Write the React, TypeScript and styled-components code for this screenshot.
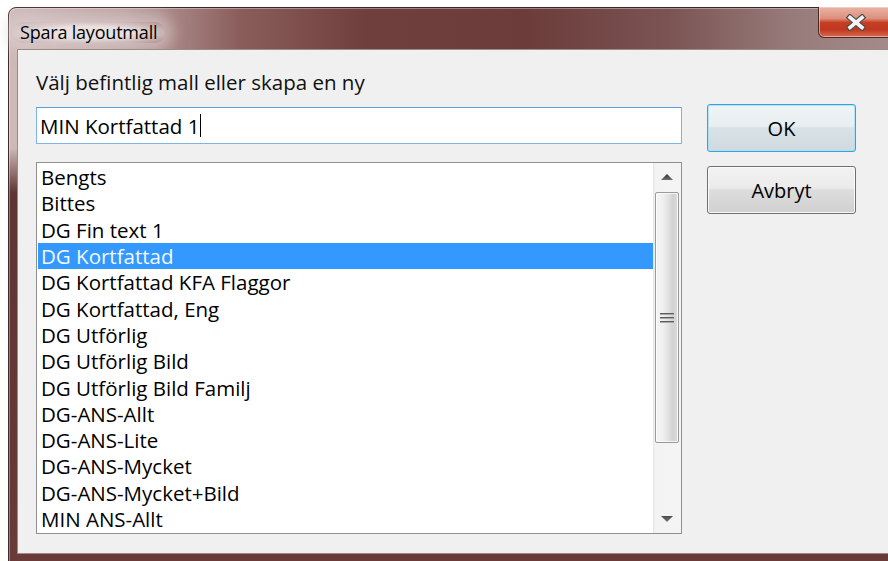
import React from "react";
import styled, { createGlobalStyle } from "styled-components";

const GlobalStyle = createGlobalStyle`
  html, body {
    margin: 0;
    padding: 0;
    background: #ffffff;
    overflow: hidden;
  }
  body {
    font-family: "Open Sans", "Noto Sans", sans-serif;
  }
`;

const FONT = `"Open Sans", "Noto Sans", sans-serif`;

const Desktop = styled.div`
  padding: 7px 0 0 8px;
  width: 888px;
  height: 561px;
  box-sizing: border-box;
`;

const Frame = styled.div`
  width: 892px;
  height: 570px;
  box-sizing: border-box;
  border: 1px solid #3e2a29;
  border-radius: 8px 8px 0 0;
  display: flex;
  flex-direction: column;
  background:
    linear-gradient(180deg, rgba(96, 52, 49, 0) 0px, rgba(96, 52, 49, 0) 140px, #5f3431 185px, #6a3b38 100%),
    linear-gradient(90deg, #cdbab9 0%, #bca3a2 13%, #8a5d5b 26%, #6f3f3d 40%, #6b3c3a 58%, #7a5453 74%, #977b7a 88%, #a58d8c 100%);
  box-shadow: inset 0 0 0 1px rgba(255, 255, 255, 0.35);
`;

const TitleBar = styled.div`
  height: 41px;
  flex: none;
  display: flex;
  align-items: flex-start;
  padding-left: 11px;
`;

const TitleText = styled.div`
  margin-top: 14px;
  font-family: ${FONT};
  font-size: 18px;
  line-height: 21px;
  color: #000;
  letter-spacing: -0.2px;
  padding: 0 8px;
  margin-left: -8px;
  border-radius: 14px;
  background: radial-gradient(ellipse at center, rgba(238, 230, 230, 0.9) 40%, rgba(230, 220, 220, 0.55) 65%, rgba(220, 205, 205, 0) 100%);
  box-shadow: 0 0 14px 8px rgba(228, 216, 216, 0.5);
`;

const CloseButton = styled.div`
  margin-left: auto;
  margin-right: 5px;
  margin-top: -1px;
  width: 76px;
  height: 31px;
  box-sizing: border-box;
  border: 1px solid #4a2a26;
  border-top: none;
  border-radius: 0 0 6px 6px;
  display: flex;
  align-items: center;
  justify-content: center;
  background: linear-gradient(180deg, #e9b3a6 0%, #dd8f7d 38%, #c53e24 52%, #c0381f 75%, #d76b52 100%);
  box-shadow: inset 0 0 0 1px rgba(255, 220, 210, 0.55);
`;

const Client = styled.div`
  margin: 0 8px;
  height: 505px;
  box-sizing: border-box;
  flex: none;
  background: #f0f0f0;
  border: 1px solid #9c8a89;
  padding: 19px 0 0 18px;
  display: flex;
  flex-direction: column;
`;

const Prompt = styled.div`
  font-family: ${FONT};
  font-size: 20.5px;
  line-height: 27px;
  color: #111;
  margin-bottom: 8px;
`;

const Body = styled.div`
  display: flex;
  align-items: flex-start;
  gap: 25px;
`;

const LeftColumn = styled.div`
  width: 646px;
  display: flex;
  flex-direction: column;
  gap: 18px;
  padding-top: 3px;
`;

const TextField = styled.div`
  height: 37px;
  box-sizing: border-box;
  background: #fff;
  border: 1px solid #7eb4ea;
  border-top-color: #5c9fdc;
  display: flex;
  align-items: center;
  padding-left: 3px;
  font-family: ${FONT};
  font-size: 20.5px;
  color: #000;
`;

const Caret = styled.span`
  display: inline-block;
  width: 1px;
  height: 23px;
  background: #000;
  margin-left: 1px;
`;

const ListBox = styled.div`
  height: 372px;
  box-sizing: border-box;
  background: #fff;
  border: 1px solid #8f9091;
  display: flex;
  overflow: hidden;
`;

const Items = styled.div`
  flex: 1;
  padding-top: 1px;
  overflow: hidden;
`;

const Item = styled.div<{ $selected?: boolean }>`
  height: 26.3px;
  margin-left: 1px;
  padding-left: 3px;
  display: flex;
  align-items: center;
  font-family: ${FONT};
  font-size: 20.5px;
  white-space: nowrap;
  color: ${(p) => (p.$selected ? "#f4f8ff" : "#000")};
  background: ${(p) => (p.$selected ? "#3399ff" : "transparent")};
`;

const ScrollBar = styled.div`
  width: 28px;
  flex: none;
  display: flex;
  flex-direction: column;
  align-items: center;
  background: linear-gradient(90deg, #e3e3e3 0px, #f3f3f3 2px, #f4f4f4 100%);
`;

const ArrowCell = styled.div`
  height: 28px;
  width: 100%;
  flex: none;
  display: flex;
  align-items: center;
  justify-content: center;
`;

const Thumb = styled.div`
  width: 24px;
  height: 251px;
  box-sizing: border-box;
  margin-top: 1px;
  border: 1px solid #9a9a9a;
  border-radius: 2px;
  background: linear-gradient(90deg, #f5f5f5 0%, #eeeeee 35%, #e2e2e2 55%, #d3d3d3 75%, #d6d6d6 92%, #ececec 100%);
  box-shadow: inset 0 0 0 1px rgba(255, 255, 255, 0.7);
  display: flex;
  align-items: center;
  justify-content: center;
`;

const Gripper = styled.div`
  width: 14px;
  display: flex;
  flex-direction: column;
  gap: 2px;
  margin-left: -1px;
`;

const GripLine = styled.div`
  height: 2px;
  background: linear-gradient(180deg, #5e5e5e 0 1px, #a9a9a9 1px 2px);
`;

const Spacer = styled.div`
  flex: 1;
`;

const Buttons = styled.div`
  display: flex;
  flex-direction: column;
  gap: 14px;
`;

const PushButton = styled.div<{ $default?: boolean }>`
  width: 149px;
  height: 48px;
  box-sizing: border-box;
  border-radius: 3px;
  border: 1px solid ${(p) => (p.$default ? "#3aa0dc" : "#707070")};
  background: ${(p) =>
    p.$default
      ? "linear-gradient(180deg, #eff4f6 0%, #e8eef1 46%, #d9e2e6 50%, #d0dade 100%)"
      : "linear-gradient(180deg, #f2f2f2 0%, #ebebeb 46%, #dddddd 50%, #d0d0d0 100%)"};
  box-shadow: inset 0 0 0 1px
    ${(p) => (p.$default ? "rgba(160, 225, 250, 0.8)" : "rgba(252, 252, 252, 0.9)")};
  display: flex;
  align-items: center;
  justify-content: center;
  font-family: ${FONT};
  font-size: 20px;
  color: #000;
`;

const templates = [
  "Bengts",
  "Bittes",
  "DG Fin text 1",
  "DG Kortfattad",
  "DG Kortfattad KFA Flaggor",
  "DG Kortfattad, Eng",
  "DG Utförlig",
  "DG Utförlig Bild",
  "DG Utförlig Bild Familj",
  "DG-ANS-Allt",
  "DG-ANS-Lite",
  "DG-ANS-Mycket",
  "DG-ANS-Mycket+Bild",
  "MIN ANS-Allt",
];

const CloseGlyph = () => (
  <svg width="20" height="17" viewBox="0 0 20 17">
    <g strokeLinecap="square">
      <path d="M4 3.5 L16 13.5 M16 3.5 L4 13.5" stroke="#4b4b4b" strokeWidth="6" />
      <path d="M4 3.5 L16 13.5 M16 3.5 L4 13.5" stroke="#f4f4f4" strokeWidth="3.6" />
    </g>
  </svg>
);

const ArrowUp = () => (
  <svg width="12" height="6" viewBox="0 0 12 6">
    <defs>
      <linearGradient id="arrowUpFill" x1="0" y1="0" x2="0" y2="1">
        <stop offset="0" stopColor="#2f2f2f" />
        <stop offset="1" stopColor="#6f6f6f" />
      </linearGradient>
    </defs>
    <polygon points="6,0 12,6 0,6" fill="url(#arrowUpFill)" />
  </svg>
);

const ArrowDown = () => (
  <svg width="12" height="6" viewBox="0 0 12 6">
    <defs>
      <linearGradient id="arrowDownFill" x1="0" y1="0" x2="0" y2="1">
        <stop offset="0" stopColor="#4a4a4a" />
        <stop offset="1" stopColor="#7a7a7a" />
      </linearGradient>
    </defs>
    <polygon points="0,0 12,0 6,6" fill="url(#arrowDownFill)" />
  </svg>
);

export default function App() {
  const selected = "DG Kortfattad";
  return (
    <>
      <GlobalStyle />
      <Desktop>
        <Frame>
          <TitleBar>
            <TitleText>Spara layoutmall</TitleText>
            <CloseButton>
              <CloseGlyph />
            </CloseButton>
          </TitleBar>
          <Client>
            <Prompt>Välj befintlig mall eller skapa en ny</Prompt>
            <Body>
              <LeftColumn>
                <TextField>
                  MIN Kortfattad 1<Caret />
                </TextField>
                <ListBox>
                  <Items>
                    {templates.map((name) => (
                      <Item key={name} $selected={name === selected}>
                        {name}
                      </Item>
                    ))}
                  </Items>
                  <ScrollBar>
                    <ArrowCell>
                      <ArrowUp />
                    </ArrowCell>
                    <Thumb>
                      <Gripper>
                        <GripLine />
                        <GripLine />
                        <GripLine />
                      </Gripper>
                    </Thumb>
                    <Spacer />
                    <ArrowCell>
                      <ArrowDown />
                    </ArrowCell>
                  </ScrollBar>
                </ListBox>
              </LeftColumn>
              <Buttons>
                <PushButton $default>OK</PushButton>
                <PushButton>Avbryt</PushButton>
              </Buttons>
            </Body>
          </Client>
        </Frame>
      </Desktop>
    </>
  );
}
